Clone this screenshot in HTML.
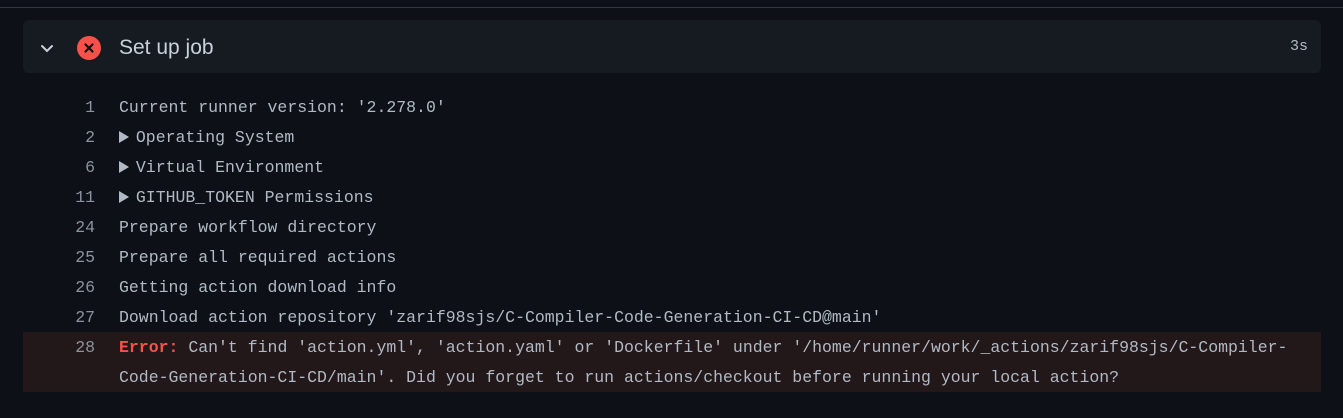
<!DOCTYPE html>
<html><head><style>
body{margin:0;width:1343px;height:418px;background:#0d1117;overflow:hidden;font-family:"Liberation Sans",sans-serif;}
.top{position:absolute;left:0;top:7px;width:1343px;height:1px;background:#30363d;}
.hdr{position:absolute;left:23px;top:20px;width:1298px;height:53px;background:#161b22;border-radius:6px;}
.chev{position:absolute;left:16px;top:20px;}
.x{position:absolute;left:54px;top:16px;width:24px;height:24px;border-radius:50%;background:#f85149;}
.ttl{position:absolute;left:96px;top:16px;font-size:21px;color:#c9d1d9;}
.dur{position:absolute;right:13px;top:18px;font-size:15px;color:#b1bac4;font-family:"Liberation Mono",monospace;}
.ln{position:absolute;left:23px;width:1298px;height:30px;font-family:"Liberation Mono",monospace;font-size:16.5px;color:#b1bac4;line-height:30px;white-space:pre;}
.n{position:absolute;left:0;width:72px;text-align:right;color:#8b949e;}
.t{position:absolute;left:96px;}
.err{background:#221719;height:60px;}
.tri{display:inline-block;width:10px;height:12px;vertical-align:-1px;margin-right:-3px;}
</style></head><body>
<div class="top"></div>
<div class="hdr">
<svg class="chev" width="16" height="16" viewBox="0 0 16 16"><path d="M3 6l5 5 5-5" stroke="#c9d1d9" stroke-width="2" fill="none" stroke-linecap="round"/></svg>
<div class="x"><svg width="24" height="24" viewBox="0 0 24 24"><path d="M8.5 8.5l7 7M15.5 8.5l-7 7" stroke="#0d1117" stroke-width="2.2" stroke-linecap="round"/></svg></div>
<div class="ttl">Set up job</div>
<div class="dur">3s</div>
</div>
<div class="ln" style="top:93px"><span class="n">1</span><span class="t">Current runner version: '2.278.0'</span></div>
<div class="ln" style="top:123px"><span class="n">2</span><span class="t"><svg class="tri" viewBox="0 0 10 12"><path d="M0 0L10 6L0 12Z" fill="#b1bac4"/></svg> Operating System</span></div>
<div class="ln" style="top:153px"><span class="n">6</span><span class="t"><svg class="tri" viewBox="0 0 10 12"><path d="M0 0L10 6L0 12Z" fill="#b1bac4"/></svg> Virtual Environment</span></div>
<div class="ln" style="top:183px"><span class="n">11</span><span class="t"><svg class="tri" viewBox="0 0 10 12"><path d="M0 0L10 6L0 12Z" fill="#b1bac4"/></svg> GITHUB_TOKEN Permissions</span></div>
<div class="ln" style="top:213px"><span class="n">24</span><span class="t">Prepare workflow directory</span></div>
<div class="ln" style="top:243px"><span class="n">25</span><span class="t">Prepare all required actions</span></div>
<div class="ln" style="top:273px"><span class="n">26</span><span class="t">Getting action download info</span></div>
<div class="ln" style="top:303px"><span class="n">27</span><span class="t">Download action repository 'zarif98sjs/C-Compiler-Code-Generation-CI-CD@main'</span></div>
<div class="ln err" style="top:332px;padding-top:1px;height:59px"><span class="n">28</span><span class="t"><b style="color:#f85149">Error:</b> Can't find 'action.yml', 'action.yaml' or 'Dockerfile' under '/home/runner/work/_actions/zarif98sjs/C-Compiler-
Code-Generation-CI-CD/main'. Did you forget to run actions/checkout before running your local action?</span></div>
</body></html>
